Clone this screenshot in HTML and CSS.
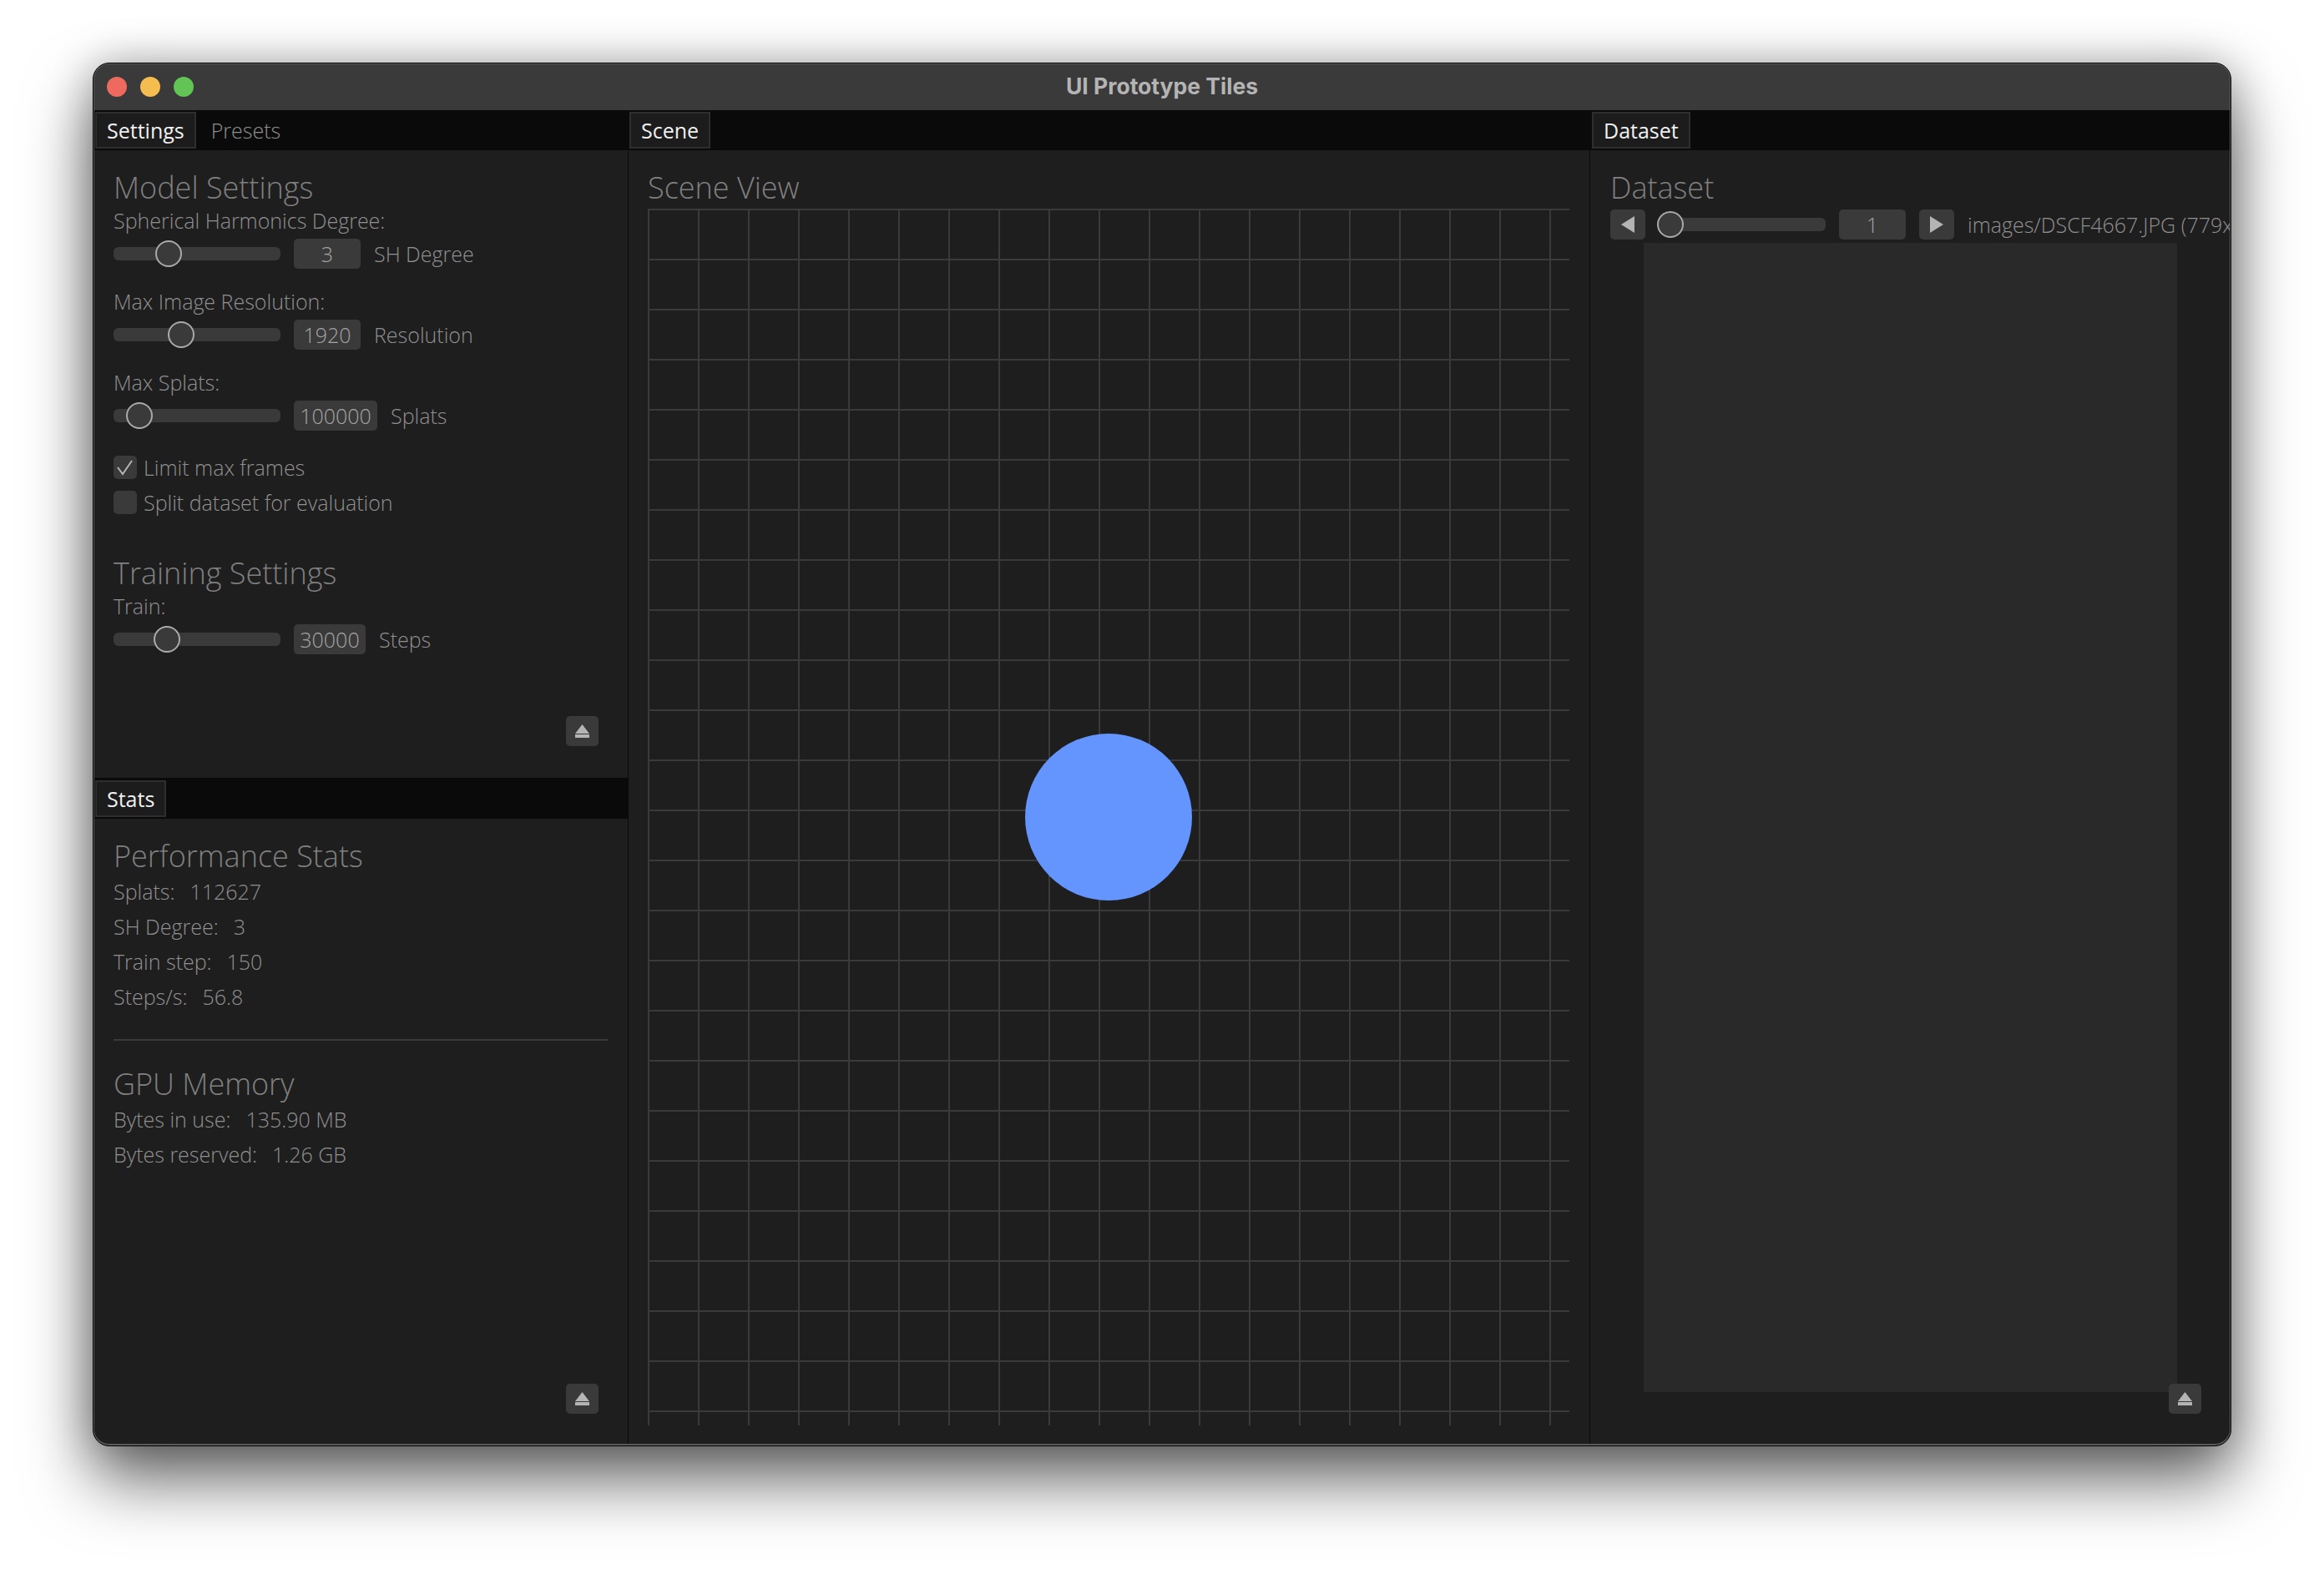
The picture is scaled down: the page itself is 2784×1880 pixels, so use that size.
FILE: index.html
```html
<!DOCTYPE html>
<html lang="en">
<head>
    <meta charset="UTF-8">
    <title>UI Prototype Tiles</title>
    <link rel="stylesheet" href="styles.css">
</head>
<body>
    <div class="window">
        <div class="titlebar">
            <div class="lights">
                <span class="light red"></span>
                <span class="light yellow"></span>
                <span class="light green"></span>
            </div>
            <div class="wintitle">UI Prototype Tiles</div>
        </div>
        <div class="tiles">
            <div class="col-left">
                <div class="tile tile-settings">
                    <div class="tabbar">
                        <div class="tab active">Settings</div>
                        <div class="tab">Presets</div>
                    </div>
                    <div class="body">
                        <h2>Model Settings</h2>
                        <div class="label">Spherical Harmonics Degree:</div>
                        <div class="row">
                            <div class="slider"><span class="thumb" style="left: 50px"></span></div>
                            <div class="num">3</div>
                            <div class="unit">SH Degree</div>
                        </div>
                        <div class="label next">Max Image Resolution:</div>
                        <div class="row">
                            <div class="slider"><span class="thumb" style="left: 65px"></span></div>
                            <div class="num">1920</div>
                            <div class="unit">Resolution</div>
                        </div>
                        <div class="label next">Max Splats:</div>
                        <div class="row">
                            <div class="slider"><span class="thumb" style="left: 15px"></span></div>
                            <div class="num wide">100000</div>
                            <div class="unit">Splats</div>
                        </div>
                        <div class="check first">
                            <span class="box">
                                <svg width="28" height="28" viewBox="0 0 28 28"><path d="M5 14l6 8L22 6" fill="none" stroke="#b4b4b4" stroke-width="2"/></svg>
                            </span>
                            <span>Limit max frames</span>
                        </div>
                        <div class="check">
                            <span class="box"></span>
                            <span>Split dataset for evaluation</span>
                        </div>
                        <h2 class="second">Training Settings</h2>
                        <div class="label">Train:</div>
                        <div class="row">
                            <div class="slider"><span class="thumb" style="left: 48px"></span></div>
                            <div class="num mid">30000</div>
                            <div class="unit">Steps</div>
                        </div>
                        <button class="eject"><svg width="17" height="16" viewBox="0 0 17 16"><path d="M8.5 0L17 11H0zM0 12h17v4H0z" fill="#b4b4b4"/></svg></button>
                    </div>
                </div>
                <div class="tile tile-stats">
                    <div class="tabbar tall">
                        <div class="tab active">Stats</div>
                    </div>
                    <div class="body">
                        <h2>Performance Stats</h2>
                        <div class="stat"><span>Splats:</span><span>112627</span></div>
                        <div class="stat"><span>SH Degree:</span><span>3</span></div>
                        <div class="stat"><span>Train step:</span><span>150</span></div>
                        <div class="stat"><span>Steps/s:</span><span>56.8</span></div>
                        <div class="sep"></div>
                        <h2>GPU Memory</h2>
                        <div class="stat"><span>Bytes in use:</span><span>135.90 MB</span></div>
                        <div class="stat"><span>Bytes reserved:</span><span>1.26 GB</span></div>
                        <button class="eject"><svg width="17" height="16" viewBox="0 0 17 16"><path d="M8.5 0L17 11H0zM0 12h17v4H0z" fill="#b4b4b4"/></svg></button>
                    </div>
                </div>
            </div>
            <div class="tile col-scene">
                <div class="tabbar">
                    <div class="tab active">Scene</div>
                </div>
                <div class="body">
                    <h2>Scene View</h2>
                    <div class="grid"><span class="dot"></span></div>
                </div>
            </div>
            <div class="tile col-data">
                <div class="tabbar">
                    <div class="tab active">Dataset</div>
                </div>
                <div class="body">
                    <h2>Dataset</h2>
                    <div class="row datarow">
                        <button class="step"><svg width="16" height="20" viewBox="0 0 16 20"><path d="M16 0v20L0 10z" fill="#b4b4b4"/></svg></button>
                        <div class="slider"><span class="thumb" style="left: -2px"></span></div>
                        <div class="num">1</div>
                        <button class="step"><svg width="16" height="20" viewBox="0 0 16 20"><path d="M0 0v20l16-10z" fill="#b4b4b4"/></svg></button>
                        <div class="unit">images/DSCF4667.JPG (779x519)</div>
                    </div>
                    <div class="preview"></div>
                    <button class="eject"><svg width="17" height="16" viewBox="0 0 17 16"><path d="M8.5 0L17 11H0zM0 12h17v4H0z" fill="#b4b4b4"/></svg></button>
                </div>
            </div>
        </div>
    </div>
</body>
</html>
```

FILE: styles.css
```css
*{
    box-sizing: border-box;
    margin: 0;
    padding: 0;
}
html, body{
    height: 100%;
}
body{
    background: #fff;
    padding: 75px 0 0 111px;
    font-family: "Open Sans", "Noto Sans", sans-serif;
    font-weight: 300;
    font-size: 25px;
    color: #909090;
    overflow: hidden;
}
.window{
    width: 2562px;
    height: 1658px;
    position: relative;
    display: flex;
    flex-direction: column;
    background: #1e1e1e;
    border: 1px solid #000;
    border-radius: 20px;
    box-shadow: 0 40px 80px rgba(0,0,0,.6), 0 0 50px rgba(0,0,0,.25);
    overflow: hidden;
}
/* light edge on top of the panels */
.window::after{
    content: "";
    position: absolute;
    inset: 0;
    border: 1px solid #5a5a5a;
    border-bottom-width: 2px;
    border-radius: 19px;
    pointer-events: none;
}
.titlebar{
    height: 56px;
    flex: none;
    display: flex;
    align-items: center;
    position: relative;
    background: #3a3a3a;
}
.lights{
    display: flex;
    gap: 16px;
    padding-left: 16px;
}
.light{
    width: 24px;
    height: 24px;
    border-radius: 50%;
}
.red{background: #ee6a5f;}
.yellow{background: #f5bd4f;}
.green{background: #61c454;}
.wintitle{
    position: absolute;
    left: 0;
    right: 0;
    padding-bottom: 2px;
    text-align: center;
    font-family: "Inter", sans-serif;
    font-weight: 700;
    font-size: 26.5px;
    color: #b4b4b4;
}
.tiles{
    flex: 1;
    min-height: 0;
    display: flex;
}
.col-left{
    width: 641px;
    flex: none;
    display: flex;
    flex-direction: column;
    border-right: 1px solid #0a0a0a;
}
.tile{
    display: flex;
    flex-direction: column;
}
.tile-settings{height: 800px; flex: none;}
.tile-stats{flex: 1;}
.col-scene{
    width: 1152px;
    flex: none;
    border-right: 1px solid #0a0a0a;
}
.col-scene .tabbar{padding-left: 1px;}
.col-scene .body{padding-left: 23px;}
.col-data{flex: 1; min-width: 0;}
.tabbar{
    height: 48px;
    flex: none;
    display: flex;
    background: #0a0a0a;
    padding: 2px 0 0 2px;
}
.tabbar.tall{
    height: 49px;
    padding-top: 3px;
}
.tab{
    height: 44px;
    padding: 0 12px;
    line-height: 40px;
    border: 2px solid transparent;
    color: #909090;
}
.tab.active{
    background: #1c1c1c;
    border-color: #2e2e2e;
    color: #f0f0f0;
    font-weight: 400;
}
.tab + .tab{padding-left: 16px;}
.body{
    flex: 1;
    min-height: 0;
    position: relative;
    padding: 25px 24px 0;
    overflow: hidden;
}
h2{
    font-size: 36px;
    font-weight: 300;
    line-height: 40px;
    color: #808080;
}
h2.second{margin-top: 51px;}
.label{
    height: 28px;
    line-height: 28px;
    margin-top: 5px;
}
.label.next{margin-top: 25px;}
.row{
    display: flex;
    align-items: center;
    gap: 16px;
    height: 36px;
    margin-top: 8px;
}
.slider{
    width: 200px;
    height: 16px;
    flex: none;
    position: relative;
    background: #3a3a3a;
    border-radius: 6px;
}
.thumb{
    position: absolute;
    top: -8px;
    width: 32px;
    height: 32px;
    background: #3a3a3a;
    border: 2px solid #aaa;
    border-radius: 50%;
}
.num{
    width: 80px;
    height: 36px;
    flex: none;
    line-height: 36px;
    text-align: center;
    background: #3a3a3a;
    border-radius: 5px;
    color: #a4a4a4;
}
.num.wide{width: 100px;}
.num.mid{width: 86px;}
.check{
    display: flex;
    align-items: center;
    gap: 8px;
    height: 28px;
    margin-top: 14px;
    line-height: 28px;
}
.check.first{margin-top: 30px;}
.box{
    width: 28px;
    height: 28px;
    background: #3a3a3a;
    border-radius: 5px;
}
.box svg{display: block;}
.stat{
    display: flex;
    gap: 18px;
    height: 42px;
    line-height: 42px;
}
h2 + .stat{margin-top: 1px;}
.sep{
    height: 2px;
    background: #3a3a3a;
    margin: 30px 0 32px;
}
.eject, .step{
    display: flex;
    align-items: center;
    justify-content: center;
    border: none;
    background: #3a3a3a;
    border-radius: 5px;
}
.eject{
    position: absolute;
    width: 39px;
    height: 36px;
    right: 35px;
    bottom: 38px;
}
.grid{
    width: 1104px;
    height: 1458px;
    margin-top: 5px;
    position: relative;
    background-image: linear-gradient(#3a3a3a 2px, transparent 2px), linear-gradient(90deg, #3a3a3a 2px, transparent 2px);
    background-size: 60px 60px;
}
.dot{
    position: absolute;
    left: 452px;
    top: 629px;
    width: 200px;
    height: 200px;
    background: #6495ff;
    border-radius: 50%;
}
.datarow{margin-top: 6px; white-space: nowrap;}
.step{width: 42px; height: 36px; flex: none;}
.preview{
    width: 639px;
    height: 1377px;
    margin: 4px 0 0 40px;
    background: #292929;
}
```
